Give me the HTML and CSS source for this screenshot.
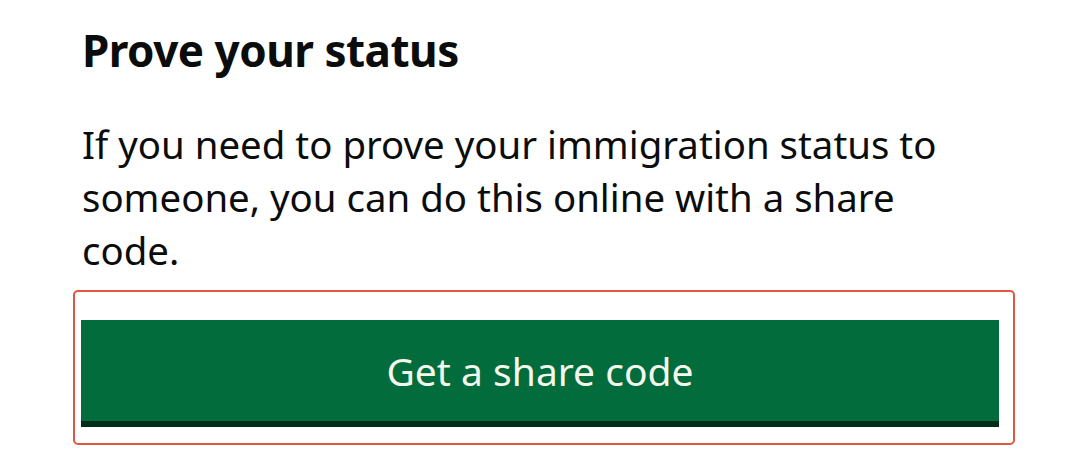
FILE: index.html
```html
<!DOCTYPE html>
<html lang="en">
<head>
<meta charset="utf-8">
<title>Prove your status</title>
<link rel="stylesheet" href="styles.css">
</head>
<body>
<main class="page">
  <h2 class="heading">Prove your status</h2>
  <p class="body">If you need to prove your immigration status to someone, you can do this online with a share code.</p>
  <div class="highlight">
    <button class="button" type="button">Get a share code</button>
  </div>
</main>
</body>
</html>
```

FILE: styles.css
```css
html, body {
  margin: 0;
  padding: 0;
  background: #ffffff;
}

.page {
  width: 1080px;
  height: 464px;
  box-sizing: border-box;
  padding: 0 0 0 73px;
  font-family: "Noto Sans", "Open Sans", sans-serif;
  color: #0b0c0c;
  overflow: hidden;
}

.heading {
  margin: 0;
  padding: 22px 0 0 9px;
  font-size: 44px;
  line-height: 56px;
  font-weight: 700;
  letter-spacing: -0.5px;
}

.body {
  margin: 0;
  padding: 40px 0 0 9px;
  width: 880px;
  font-size: 38.4px;
  line-height: 53px;
  font-weight: 400;
}

.highlight {
  margin-top: 13px;
  width: 942px;
  box-sizing: border-box;
  border: 2px solid #e0573f;
  border-radius: 5px;
  padding: 28px 14px 16px 6px;
}

.button {
  display: block;
  width: 100%;
  height: 101px;
  margin: 0 0 6px;
  border: 0;
  border-radius: 0;
  background: #036c3c;
  box-shadow: 0 6px 0 #002d18;
  color: #f4f8ec;
  font-family: "Noto Sans", "Open Sans", sans-serif;
  font-size: 39px;
  font-weight: 400;
  padding: 0;
  cursor: pointer;
}
```
